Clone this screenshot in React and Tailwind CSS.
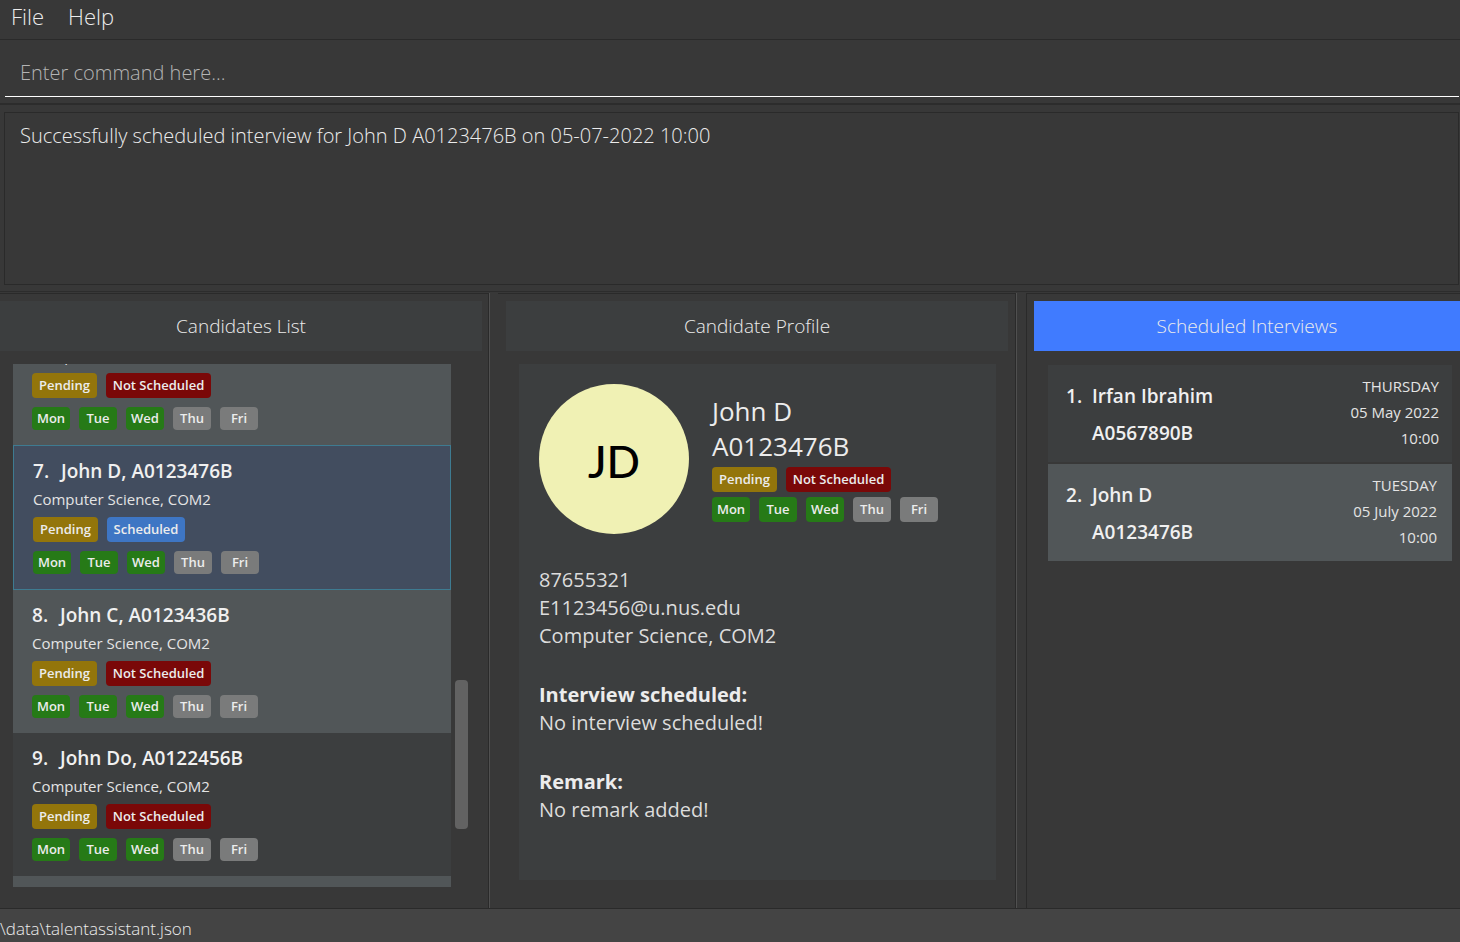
import React from "react";

const DAYS = [
  { name: "Mon", free: true },
  { name: "Tue", free: true },
  { name: "Wed", free: true },
  { name: "Thu", free: false },
  { name: "Fri", free: false },
];

const CANDIDATES = [
  { no: 7, name: "John D", id: "A0123476B", scheduled: true, tone: "bg-[#424d5f] border border-[#3e7b91]" },
  { no: 8, name: "John C", id: "A0123436B", scheduled: false, tone: "bg-[#515658]" },
  { no: 9, name: "John Do", id: "A0122456B", scheduled: false, tone: "bg-[#3c3e3f]" },
];

const INTERVIEWS = [
  { no: 1, name: "Irfan Ibrahim", id: "A0567890B", day: "THURSDAY", date: "05 May 2022", time: "10:00", tone: "bg-[#3c3e3f] pr-[13px]" },
  { no: 2, name: "John D", id: "A0123476B", day: "TUESDAY", date: "05 July 2022", time: "10:00", tone: "bg-[#515658] pr-[15px]" },
];

function StatusTags({ scheduled }) {
  return (
    <div className="flex gap-[9px] text-[13px] font-semibold text-[#ececec]">
      <span className="flex h-[25px] w-[65px] items-center justify-center rounded bg-[#93750b]">Pending</span>
      {scheduled ? (
        <span className="flex h-[25px] w-[78px] items-center justify-center rounded bg-[#3e76c4]">Scheduled</span>
      ) : (
        <span className="flex h-[25px] w-[105px] items-center justify-center rounded bg-[#7a0808]">Not Scheduled</span>
      )}
    </div>
  );
}

function DayTags({ size }) {
  return (
    <div className="flex gap-[9px] text-[13px] font-semibold text-[#ececec]">
      {DAYS.map((d) => (
        <span
          key={d.name}
          className={`${size} flex w-[38px] items-center justify-center rounded ${d.free ? "bg-[#267a17]" : "bg-[#7a7b7b]"}`}
        >
          {d.name}
        </span>
      ))}
    </div>
  );
}

function CandidateDetails({ scheduled }) {
  return (
    <>
      <p className="mb-1 shrink-0 text-[15px] leading-7 text-[#e4e4e4]">Computer Science, COM2</p>
      <div className="flex flex-col gap-[9px]">
        <StatusTags scheduled={scheduled} />
        <DayTags size="h-[23px]" />
      </div>
    </>
  );
}

function CandidateRow({ c }) {
  return (
    <li className={`flex shrink-0 flex-col pt-[11px] pb-[15px] pl-[19px] whitespace-nowrap ${c.tone}`}>
      <div className="flex shrink-0 text-[19px] leading-7 font-semibold text-[#f0f0f0]">
        <span className="w-7">{c.no}.</span>
        <span>{c.name}, {c.id}</span>
      </div>
      <CandidateDetails scheduled={c.scheduled} />
    </li>
  );
}

function PanelTitle({ children, tone }) {
  return (
    <h2 className={`flex h-[50px] shrink-0 items-center justify-center text-[19px] font-light ${tone}`}>{children}</h2>
  );
}

function Splitter() {
  return <div className="border-l border-[#505050] bg-[#383838]" />;
}

export default function App() {
  return (
    <div className="flex h-screen flex-col overflow-hidden bg-[#383838] font-['Open_Sans','Noto_Sans',sans-serif] text-[#ececec]">
      <nav className="flex h-10 shrink-0 items-start gap-6 border-b border-[#2a2a2a] px-[11px] pt-[2px] text-[22px] leading-7 font-light">
        <button type="button">File</button>
        <button type="button">Help</button>
      </nav>

      <div className="shrink-0 border-b-2 border-[#2c2c2c] pt-2 pr-px pb-[6px] pl-[5px]">
        <input
          type="text"
          aria-label="Command"
          placeholder="Enter command here..."
          className="block h-[49px] w-full border-b border-white bg-transparent px-[15px] text-[20px] font-light outline-none placeholder:text-[#b4b4b4]"
        />
      </div>

      <div className="shrink-0 border-b border-[#2c2c2c] pt-[7px] pr-px pb-[6px] pl-1">
        <textarea
          readOnly
          aria-label="Result"
          className="block h-[173px] w-full resize-none border border-[#2a2a2a] bg-transparent px-[15px] py-[9px] text-[20px] leading-7 font-light outline-none"
          value="Successfully scheduled interview for John D A0123476B on 05-07-2022 10:00"
        />
      </div>

      <main className="mt-px grid min-h-0 flex-1 grid-cols-[489fr_9px_518fr_10px_434fr] grid-rows-[minmax(0,1fr)]">
        <section className="flex min-h-0 flex-col border-t border-r border-[#2a2a2a] pt-[7px] pb-[21px]">
          <div className="mr-[6px] flex min-h-0 flex-1 flex-col">
            <PanelTitle tone="bg-[#3c3e3f]">Candidates List</PanelTitle>
            <div className="mt-[13px] flex min-h-0 flex-1 pr-[14px] pl-[13px]">
              <ul className="flex min-w-0 flex-1 flex-col overflow-hidden">
                <li className="flex h-[81px] shrink-0 flex-col justify-end bg-[#515658] pb-[15px] pl-[19px] whitespace-nowrap">
                  <CandidateDetails scheduled={false} />
                </li>
                {CANDIDATES.map((c) => (
                  <CandidateRow key={c.no} c={c} />
                ))}
                <li className="flex-1 bg-[#515658]" />
              </ul>
              <div className="ml-1 flex w-[13px] flex-col">
                <div className="flex-[316]" />
                <div className="flex-[149] rounded bg-[#626262]" />
                <div className="flex-[58]" />
              </div>
            </div>
          </div>
        </section>

        <Splitter />

        <section className="flex min-h-0 flex-col border-t border-r border-[#2a2a2a] pt-[7px] pr-[7px] pb-7 pl-2">
          <PanelTitle tone="bg-[#3c3e3f]">Candidate Profile</PanelTitle>
          <div className="mt-[13px] mr-3 ml-[13px] min-h-0 flex-1 overflow-hidden bg-[#3c3e3f] p-5">
            <div className="flex gap-[23px]">
              <div className="flex size-[150px] shrink-0 items-center justify-center rounded-full bg-[#f0f1b4] pt-1 font-['Lato','Open_Sans',sans-serif] text-[44px] font-medium text-black">
                JD
              </div>
              <div className="pt-[10px] whitespace-nowrap">
                <p className="text-[26px] leading-[35px]">John D</p>
                <p className="text-[26px] leading-[35px]">A0123476B</p>
                <div className="mt-[3px] flex flex-col gap-[5px]">
                  <StatusTags scheduled={false} />
                  <DayTags size="h-[25px]" />
                </div>
              </div>
            </div>
            <div className="mt-8 flex flex-col gap-[31px] text-[20px] leading-7 text-[#dcdcdc]">
              <div>
                <p>87655321</p>
                <p>E1123456@u.nus.edu</p>
                <p>Computer Science, COM2</p>
              </div>
              <div>
                <h3 className="font-bold text-[#ececec]">Interview scheduled:</h3>
                <p>No interview scheduled!</p>
              </div>
              <div>
                <h3 className="font-bold text-[#ececec]">Remark:</h3>
                <p>No remark added!</p>
              </div>
            </div>
          </div>
        </section>

        <Splitter />

        <section className="flex min-h-0 flex-col border-t border-l border-[#2a2a2a] pt-[7px] pl-[7px]">
          <PanelTitle tone="bg-[#407bff]">Scheduled Interviews</PanelTitle>
          <ul className="mt-[14px] mr-2 ml-[14px] flex flex-col gap-[2px]">
            {INTERVIEWS.map((i) => (
              <li key={i.no} className={`flex h-[97px] justify-between pl-[18px] whitespace-nowrap ${i.tone}`}>
                <div className="flex pt-[13px] text-[19px] leading-[37px] font-semibold text-[#f0f0f0]">
                  <span className="w-[26px]">{i.no}.</span>
                  <div>
                    <p>{i.name}</p>
                    <p>{i.id}</p>
                  </div>
                </div>
                <div className="pt-2 text-right text-[15px] leading-[26px] text-[#e4e4e4]">
                  <p>{i.day}</p>
                  <p>{i.date}</p>
                  <p>{i.time}</p>
                </div>
              </li>
            ))}
          </ul>
        </section>
      </main>

      <footer className="flex h-[34px] shrink-0 items-center border-t border-[#2a2a2a] bg-[#444444] pt-[6px] text-[17px] leading-6 font-light">
        \data\talentassistant.json
      </footer>
    </div>
  );
}
